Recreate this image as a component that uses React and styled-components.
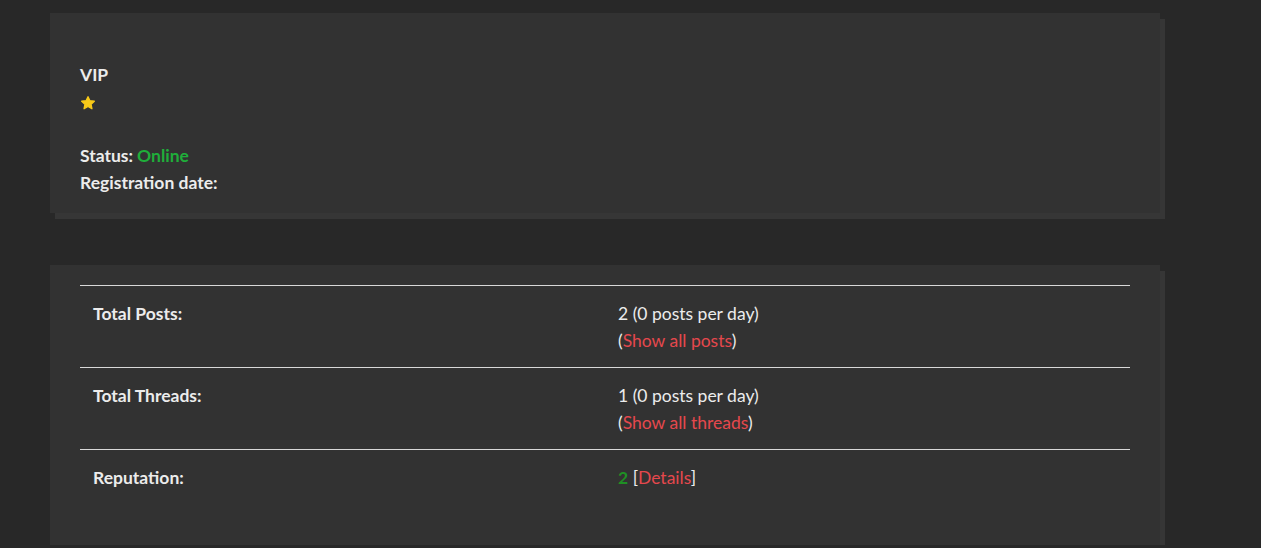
import styled, { createGlobalStyle } from "styled-components"

const GlobalStyle = createGlobalStyle`
    html, body {
        margin: 0;
        background: #282828;
        font-family: Lato, "Open Sans", sans-serif;
        color: #ececec;
    }
`

const Page = styled.div`
    padding: 13px 0 0 50px;
    width: 1110px;
    display: flex;
    flex-direction: column;
    gap: 52px;
`

const Panel = styled.section`
    background: #323232;
    box-shadow: 5px 6px 0 #363636;
    padding: ${props => props.pad};
`

const Line = styled.div`
    font-size: 17.5px;
    font-weight: 700;
    line-height: 27px;
    min-height: 27px;
    display: flex;
    align-items: center;
`

const Green = styled.span`
    color: ${props => props.dark ? "#1f8f24" : "#1fae3a"};
    font-weight: 700;
    margin-left: ${props => props.gap || 0};
`

const Table = styled.div`
    border-top: 1px solid #d8d8d8;
`

const Row = styled.div`
    display: grid;
    grid-template-columns: 1fr 1fr;
    padding: 14px 0 13px;
    min-height: 54px;
    border-bottom: ${props => props.last ? "none" : "1px solid #d8d8d8"};
`

const Cell = styled.div`
    padding: 0 13px;
    font-size: 17.5px;
    line-height: 27px;
    font-weight: ${props => props.label ? 700 : 400};
`

const Link = styled.a`
    color: #e5484d;
    text-decoration: none;
`

function Star() {
    return (
        <svg width="16" height="16" viewBox="0 0 24 24" style={{ marginTop: 2 }}>
            <path
                d="M12 2.5l2.9 6.1 6.6.8-4.9 4.6 1.3 6.6L12 17.3l-5.9 3.3 1.3-6.6-4.9-4.6 6.6-.8z"
                fill="#f7c919"
                stroke="#f7c919"
                strokeWidth="2"
                strokeLinejoin="round"
            />
        </svg>
    )
}

export default function App() {
    return (
        <>
            <GlobalStyle />
            <Page>
                <Panel pad="48px 30px 17px">
                    <Line>VIP</Line>
                    <Line><Star /></Line>
                    <Line />
                    <Line>Status:<Green gap="4px">Online</Green></Line>
                    <Line>Registration date:</Line>
                </Panel>
                <Panel pad="20px 30px 14px">
                    <Table>
                        <Row>
                            <Cell label>Total Posts:</Cell>
                            <Cell>
                                2 (0 posts per day)<br />
                                (<Link href="#">Show all posts</Link>)
                            </Cell>
                        </Row>
                        <Row>
                            <Cell label>Total Threads:</Cell>
                            <Cell>
                                1 (0 posts per day)<br />
                                (<Link href="#">Show all threads</Link>)
                            </Cell>
                        </Row>
                        <Row last>
                            <Cell label>Reputation:</Cell>
                            <Cell>
                                <Green dark>2</Green> [<Link href="#">Details</Link>]
                            </Cell>
                        </Row>
                    </Table>
                </Panel>
            </Page>
        </>
    )
}
